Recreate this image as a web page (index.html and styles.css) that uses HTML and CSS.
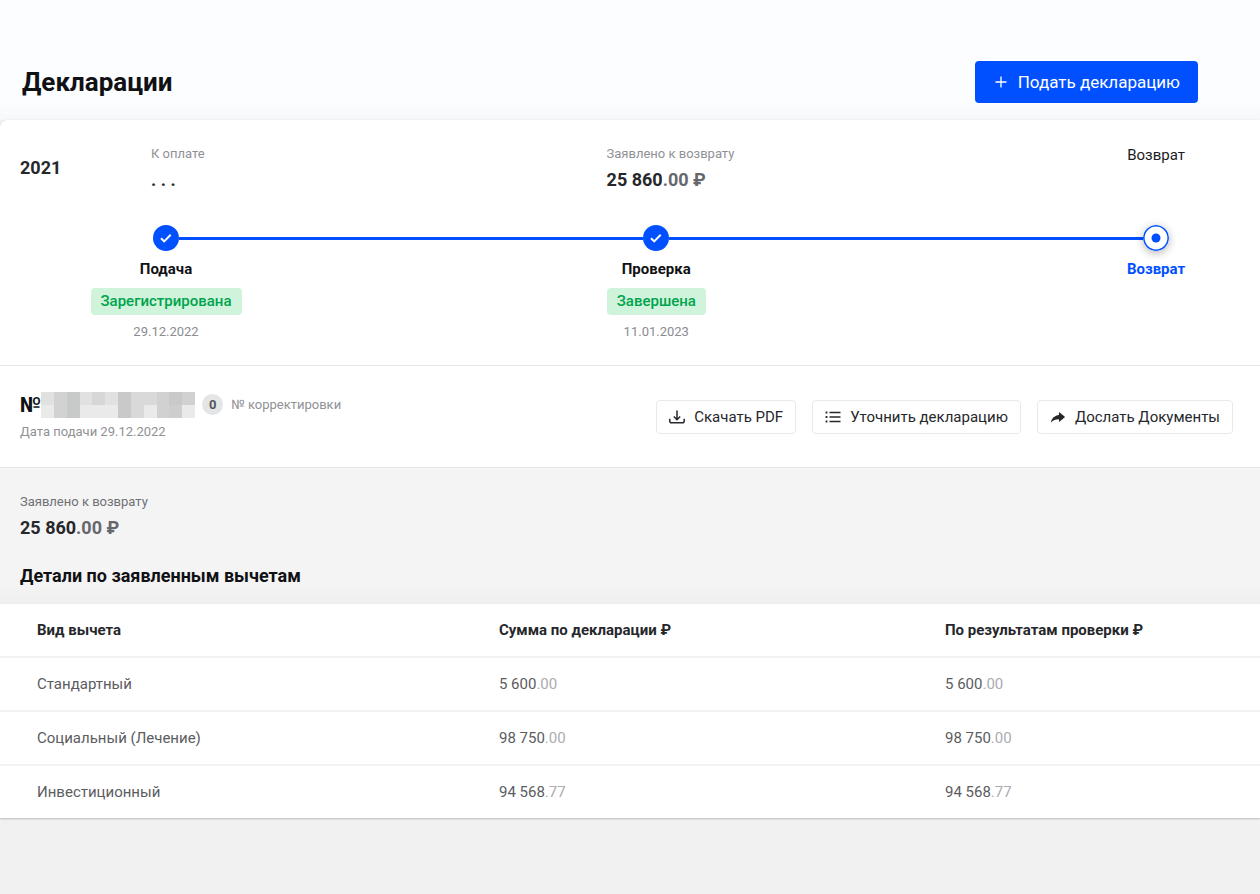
FILE: index.html
```html
<!DOCTYPE html>
<html lang="ru">
<head>
<meta charset="utf-8">
<meta name="viewport" content="width=device-width, initial-scale=1">
<title>Декларации</title>
<link rel="stylesheet" href="styles.css">
</head>
<body>
<header class="page-head">
  <h1 class="page-title">Декларации</h1>
  <button class="btn-primary" type="button">
    <svg class="plus" viewBox="0 0 12 12" aria-hidden="true"><path d="M6 .5v11M.5 6h11"/></svg>
    Подать декларацию
  </button>
</header>
<main class="card">
  <section class="progress">
    <div class="summary">
      <h2 class="year">2021</h2>
      <div class="fact">
        <div class="caption">К оплате</div>
        <div class="amount">. . .</div>
      </div>
      <div class="fact">
        <div class="caption">Заявлено к возврату</div>
        <div class="amount">25 860<span class="cents">.00 ₽</span></div>
      </div>
      <div class="state">Возврат</div>
    </div>
    <div class="steps">
      <div class="step">
        <svg class="dot" viewBox="0 0 26 26" aria-hidden="true"><circle class="dot-fill" cx="13" cy="13" r="13"/><path class="dot-check" d="M8 13.200l3.200 3.200 6.500-6.700"/></svg>
        <div class="step-name">Подача</div>
        <div class="tag">Зарегистрирована</div>
        <div class="step-date">29.12.2022</div>
      </div>
      <div class="step-line step-line-first"></div>
      <div class="step">
        <svg class="dot" viewBox="0 0 26 26" aria-hidden="true"><circle class="dot-fill" cx="13" cy="13" r="13"/><path class="dot-check" d="M8 13.200l3.200 3.200 6.500-6.700"/></svg>
        <div class="step-name">Проверка</div>
        <div class="tag">Завершена</div>
        <div class="step-date">11.01.2023</div>
      </div>
      <div class="step-line"></div>
      <div class="step">
        <svg class="dot dot-now" viewBox="0 0 26 26" aria-hidden="true"><circle class="dot-ring" cx="13" cy="13" r="12.200"/><circle class="dot-fill" cx="13" cy="13" r="4.500"/></svg>
        <div class="step-name step-name-now">Возврат</div>
      </div>
    </div>
  </section>

  <section class="declaration">
    <div class="declaration-info">
      <div class="number-row">
        <span class="number-sign">№</span>
        <svg class="number-mask" viewBox="0 0 12 2" preserveAspectRatio="none" shape-rendering="crispEdges" aria-hidden="true">
          <path fill="#e1e1e1" d="M0 0h12v1H0z"/><path fill="#eaeaea" d="M0 1h12v1H0z"/>
          <path fill="#d2d2d2" d="M1 0h1v2H1z"/><path fill="#c8caca" d="M2 0h1v2H2z"/>
          <path fill="#d7d7d7" d="M4 0h1v1H4z"/><path fill="#c9c9c9" d="M6 0h1v2H6z"/>
          <path fill="#d9d9d9" d="M7 0h2v1H7zM7 1h1v1H7z"/><path fill="#d1d1d1" d="M9 0h1v2H9zM11 0h1v1h-1z"/>
          <path fill="#c9c9c9" d="M10 0h1v1h-1z"/><path fill="#cecece" d="M10 1h1v1h-1z"/>
        </svg>
        <span class="badge">0</span>
        <span class="caption">№ корректировки</span>
      </div>
      <div class="caption">Дата подачи 29.12.2022</div>
    </div>
    <div class="actions">
      <button class="btn" type="button">
        <svg class="icon" viewBox="0 0 16 16" aria-hidden="true"><path class="stroke" d="M8 1.500v9M4.800 7.500L8 10.700l3.200-3.200M.8 9.800v2.500a1.500 1.500 0 0 0 1.500 1.500h11.400a1.500 1.500 0 0 0 1.500-1.500V9.800"/></svg>
        Скачать PDF
      </button>
      <button class="btn" type="button">
        <svg class="icon" viewBox="0 0 16 16" aria-hidden="true"><path class="stroke thin" d="M4.500 3.500h11M4.500 8h11M4.500 12.500h11"/><path class="solid" d="M.6 2.600h1.800v1.800H.6zM.6 7.100h1.800v1.800H.6zM.6 11.600h1.800v1.800H.6z"/></svg>
        Уточнить декларацию
      </button>
      <button class="btn" type="button">
        <svg class="icon" viewBox="0 0 16 16" aria-hidden="true"><path class="solid" d="M9 3.700a.4.400 0 0 1 .7-.3l5.100 4.300a.4.400 0 0 1 0 .6l-5.100 4.300a.4.400 0 0 1-.7-.3v-2C5.500 10.300 3.200 11.300.9 13.500c.5-3.900 3.300-7 8.100-7.600z"/></svg>
        Дослать Документы
      </button>
    </div>
  </section>

  <section class="details">
    <div class="caption caption-dark">Заявлено к возврату</div>
    <div class="amount">25 860<span class="cents">.00 ₽</span></div>
    <h2 class="details-title">Детали по заявленным вычетам</h2>
  </section>
  <table class="deductions">
    <thead>
      <tr><th class="col-kind" scope="col">Вид вычета</th><th class="col-sum" scope="col">Сумма по декларации ₽</th><th scope="col">По результатам проверки ₽</th></tr>
    </thead>
    <tbody>
      <tr><td>Стандартный</td><td>5 600<span class="fraction">.00</span></td><td>5 600<span class="fraction">.00</span></td></tr>
      <tr><td>Социальный (Лечение)</td><td>98 750<span class="fraction">.00</span></td><td>98 750<span class="fraction">.00</span></td></tr>
      <tr><td>Инвестиционный</td><td>94 568<span class="fraction">.77</span></td><td>94 568<span class="fraction">.77</span></td></tr>
    </tbody>
  </table>
</main>
</body>
</html>
```

FILE: styles.css
```css
* {
  box-sizing: border-box;
}

body {
  margin: 0;
  min-height: 100vh;
  background: #f1f1f1;
  color: #26272b;
  font: 15px/20px Roboto, "Liberation Sans", sans-serif;
}

h1,
h2 {
  margin: 0;
}

button {
  font: inherit;
  white-space: nowrap;
  cursor: pointer;
}

.page-head {
  display: flex;
  justify-content: space-between;
  align-items: center;
  padding: 61px 62px 17px 22px;
  background: linear-gradient(#fcfdff 85%, #f7f8fa);
}

.page-title {
  color: #101114;
  font-size: 26px;
  line-height: 32px;
}

.btn-primary {
  display: flex;
  align-items: center;
  gap: 11px;
  height: 42px;
  padding: 0 18px 0 20px;
  border: 0;
  border-radius: 4px;
  background: #0050ff;
  color: #fff;
  font-size: 17px;
}

.plus {
  width: 12px;
  height: 12px;
  fill: none;
  stroke: currentColor;
  stroke-width: 1.3;
}

.card {
  border-radius: 8px 0 0;
  background: #fff;
  box-shadow: 0 0 3px rgba(0, 0, 0, 0.08);
}

.progress {
  padding: 24px 0 23px;
  border-bottom: 1px solid #e6e7e9;
}

.summary {
  display: grid;
  grid-template-columns: 131px 7fr 8fr auto;
  padding: 0 75px 0 20px;
}

.year {
  padding-top: 14px;
  font-size: 18px;
  line-height: 20px;
}

.caption {
  color: #909196;
  font-size: 13px;
}

.caption-dark {
  color: #6f7075;
}

.amount {
  padding-top: 4px;
  font-size: 18px;
  font-weight: 700;
  line-height: 24px;
}

.cents {
  color: #66676c;
}

.state {
  color: #1b1c1f;
  line-height: 22px;
}

.steps {
  display: flex;
  align-items: flex-start;
  padding: 33px 91px 0 153px;
}

/* Captions wider than the dot overflow evenly to both sides of it. */
.step {
  display: flex;
  flex-direction: column;
  align-items: center;
  width: 26px;
  white-space: nowrap;
}

.dot {
  flex: none;
  width: 26px;
  height: 26px;
}

.dot-fill {
  fill: #0050ff;
}

.dot-check {
  fill: none;
  stroke: #fff;
  stroke-width: 2;
}

.dot-ring {
  fill: #fff;
  stroke: #0050ff;
  stroke-width: 1.6;
}

.dot-now {
  border-radius: 50%;
  box-shadow: 0 2px 8px rgba(0, 0, 0, 0.3);
}

.step-line {
  flex: 50;
  height: 3px;
  margin-top: 12px;
  background: #0050ff;
}

.step-line-first {
  flex: 49;
}

.step-name {
  margin-top: 8px;
  color: #101114;
  font-weight: 700;
}

.step-name-now {
  color: #0050ff;
}

.tag {
  margin-top: 9px;
  padding: 0 10px;
  border-radius: 4px;
  background: #cff4db;
  color: #00a34d;
  font-weight: 500;
  line-height: 27px;
}

.step-date {
  margin-top: 7px;
  color: #8b8c91;
  font-size: 13px;
}

.declaration {
  display: flex;
  justify-content: space-between;
  align-items: center;
  padding: 25px 27px 25px 20px;
  border-bottom: 1px solid #e6e7e9;
}

.number-row {
  display: flex;
  align-items: center;
  height: 27px;
}

.number-sign {
  color: #101114;
  font-size: 21px;
  font-weight: 700;
}

.number-mask {
  width: 154px;
  height: 26px;
}

.badge {
  width: 21px;
  margin: 0 8px 0 7px;
  border-radius: 50%;
  background: #e4e5e7;
  color: #55565b;
  font-size: 13px;
  font-weight: 700;
  line-height: 21px;
  text-align: center;
}

.declaration-info {
  display: grid;
  gap: 4px;
}

.actions {
  display: flex;
  gap: 16px;
}

.btn {
  display: flex;
  align-items: center;
  gap: 9px;
  height: 34px;
  padding: 0 12px;
  border: 1px solid #e8e9eb;
  border-radius: 4px;
  background: #fff;
  color: #26272b;
}

.icon {
  width: 16px;
  height: 16px;
}

.stroke {
  fill: none;
  stroke: currentColor;
  stroke-width: 1.5;
}

.thin {
  stroke-width: 1.3;
}

.solid {
  fill: currentColor;
}

.details {
  padding: 24px 20px 16px;
  background: linear-gradient(#f4f4f4 85%, #efefef);
}

.details-title {
  padding-top: 24px;
  color: #101114;
  font-size: 18px;
  line-height: 24px;
}

.deductions {
  width: 100%;
  border-spacing: 0;
  table-layout: fixed;
  background: #fff;
  box-shadow: 0 1px 2px rgba(0, 0, 0, 0.2);
}

.deductions th,
.deductions td {
  height: 54px;
  padding: 0;
  border-bottom: 2px solid #f2f2f3;
  color: #5b5c61;
  text-align: left;
}

.deductions th {
  color: #26272b;
}

.deductions tr:last-child td {
  height: 52px;
  border-bottom: 0;
}

.deductions thead th {
  color: #26272b;
}

.deductions th:first-child,
.deductions td:first-child {
  padding-left: 37px;
}

.col-kind {
  width: 39.6%;
}

.col-sum {
  width: 35.4%;
}

.deductions .fraction {
  color: #ababb0;
}
```
